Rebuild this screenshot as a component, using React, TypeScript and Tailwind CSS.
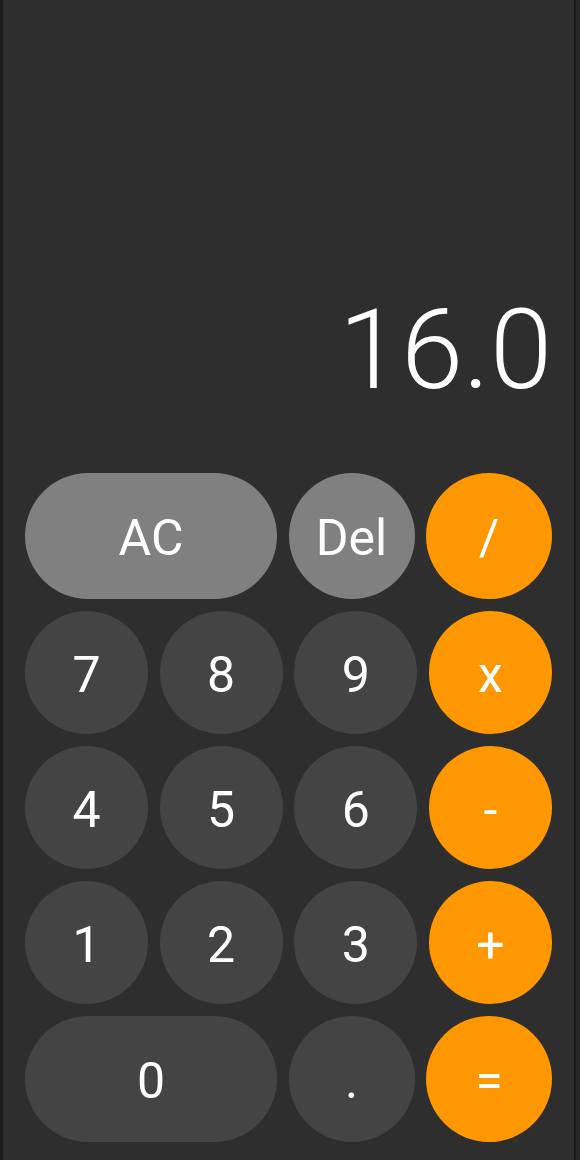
import React from "react";

const font = { fontFamily: "Roboto, 'Noto Sans', sans-serif" };

function Btn({
  label,
  w,
  h,
  kind,
}: {
  label: string;
  w: string;
  h: string;
  kind: "light" | "dark" | "op";
}) {
  const bg =
    kind === "light" ? "bg-[#808080]" : kind === "dark" ? "bg-[#444444]" : "bg-[#ff9800]";
  return (
    <div
      className={`${w} ${h} ${bg} rounded-full flex items-center justify-center pt-[4px] text-white text-[50px] leading-none`}
    >
      {label}
    </div>
  );
}

export default function App() {
  return (
    <div className="w-[580px] h-[1160px] flex bg-[#2e2e2e]" style={font}>
      <div className="w-[3px] bg-[#1c1c1c]" />
      <div className="flex-1 flex flex-col px-[22px] pb-[18px]">
        <div className="flex-1" />
        <div className="text-right text-white text-[112px] leading-none font-light mb-[67px]">
          16.0
        </div>
        <div className="flex flex-col gap-[12px]">
          <div className="flex justify-between">
            <Btn label="AC" w="w-[252px]" h="h-[126px]" kind="light" />
            <Btn label="Del" w="w-[126px]" h="h-[126px]" kind="light" />
            <Btn label="/" w="w-[126px]" h="h-[126px]" kind="op" />
          </div>
          <div className="flex justify-between">
            <Btn label="7" w="w-[123px]" h="h-[123px]" kind="dark" />
            <Btn label="8" w="w-[123px]" h="h-[123px]" kind="dark" />
            <Btn label="9" w="w-[123px]" h="h-[123px]" kind="dark" />
            <Btn label="x" w="w-[123px]" h="h-[123px]" kind="op" />
          </div>
          <div className="flex justify-between">
            <Btn label="4" w="w-[123px]" h="h-[123px]" kind="dark" />
            <Btn label="5" w="w-[123px]" h="h-[123px]" kind="dark" />
            <Btn label="6" w="w-[123px]" h="h-[123px]" kind="dark" />
            <Btn label="-" w="w-[123px]" h="h-[123px]" kind="op" />
          </div>
          <div className="flex justify-between">
            <Btn label="1" w="w-[123px]" h="h-[123px]" kind="dark" />
            <Btn label="2" w="w-[123px]" h="h-[123px]" kind="dark" />
            <Btn label="3" w="w-[123px]" h="h-[123px]" kind="dark" />
            <Btn label="+" w="w-[123px]" h="h-[123px]" kind="op" />
          </div>
          <div className="flex justify-between">
            <Btn label="0" w="w-[252px]" h="h-[126px]" kind="dark" />
            <Btn label="." w="w-[126px]" h="h-[126px]" kind="dark" />
            <Btn label="=" w="w-[126px]" h="h-[126px]" kind="op" />
          </div>
        </div>
      </div>
      <div className="w-[2px] bg-[#1a1a1a]" />
      <div className="w-[4px] bg-[#262626]" />
    </div>
  );
}
